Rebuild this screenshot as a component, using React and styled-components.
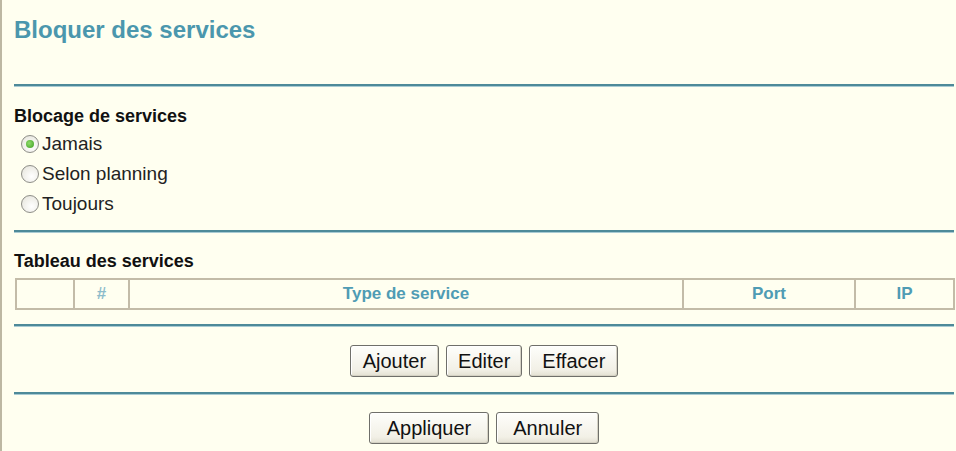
import React from "react";
import styled, { createGlobalStyle } from "styled-components";

const GlobalStyle = createGlobalStyle`
  html, body {
    margin: 0;
    padding: 0;
    background: #fffff0;
  }
  body {
    font-family: "Liberation Sans", Arial, sans-serif;
    color: #111;
  }
`;

const modes = [
  { id: "never", label: "Jamais", checked: true },
  { id: "schedule", label: "Selon planning" },
  { id: "always", label: "Toujours" },
];

const columns = [
  { key: "sel", label: "", width: 58 },
  { key: "num", label: "#", width: 55, light: true },
  { key: "type", label: "Type de service", width: 554 },
  { key: "port", label: "Port", width: 172 },
  { key: "ip", label: "IP", width: 99 },
];

function Radio({ label, checked }) {
  return (
    <RadioRow>
      <RadioDot $checked={checked} />
      <span>{label}</span>
    </RadioRow>
  );
}

export default function App() {
  return (
    <>
      <GlobalStyle />
      <Page>
        <Title>Bloquer des services</Title>
        <Divider $top={40} />

        <SectionLabel $top={19}>Blocage de services</SectionLabel>
        <RadioList>
          {modes.map((m) => (
            <Radio key={m.id} label={m.label} checked={m.checked} />
          ))}
        </RadioList>
        <Divider $top={11} />

        <SectionLabel $top={18}>Tableau des services</SectionLabel>
        <ServiceTable>
          <colgroup>
            {columns.map((c) => (
              <col key={c.key} style={{ width: c.width }} />
            ))}
          </colgroup>
          <thead>
            <tr>
              {columns.map((c) => (
                <HeadCell key={c.key} $light={c.light}>
                  {c.label}
                </HeadCell>
              ))}
            </tr>
          </thead>
        </ServiceTable>
        <Divider $top={14} />

        <ButtonRow $top={18}>
          <Button $pad={12}>Ajouter</Button>
          <Button $pad={11}>Editer</Button>
          <Button $pad={12}>Effacer</Button>
        </ButtonRow>
        <Divider $top={15} />

        <ButtonRow $top={17}>
          <Button $pad={17}>Appliquer</Button>
          <Button $pad={16}>Annuler</Button>
        </ButtonRow>
      </Page>
    </>
  );
}

// ---------- styles ----------

const Page = styled.div`
  box-sizing: border-box;
  min-height: 451px;
  padding: 16px 2px 0 12px;
  border-left: 2px solid #bdb8a3;
  background: #fffff0;
  display: flex;
  flex-direction: column;
`;

const Title = styled.h1`
  margin: 0;
  font-size: 24px;
  line-height: 28px;
  font-weight: bold;
  color: #4b97ad;
`;

const Divider = styled.div`
  margin-top: ${(p) => p.$top}px;
  height: 0;
  border-top: 2px solid #4e8a99;
  border-bottom: 1px solid #a9cbd3;
`;

const SectionLabel = styled.div`
  margin-top: ${(p) => p.$top}px;
  font-size: 18px;
  line-height: 20px;
  font-weight: bold;
  color: #111;
`;

const RadioList = styled.div`
  margin-top: 3px;
  padding-left: 7px;
  display: flex;
  flex-direction: column;
`;

const RadioRow = styled.label`
  height: 30px;
  display: flex;
  align-items: center;
  gap: 3px;
  font-size: 19px;
  color: #222;
`;

const RadioDot = styled.span`
  box-sizing: border-box;
  width: 18px;
  height: 18px;
  border-radius: 50%;
  border: 1.5px solid #8e8e88;
  background: radial-gradient(circle at 60% 65%, #ffffff 0%, #ecebe4 70%, #d8d7ce 100%);
  display: flex;
  align-items: center;
  justify-content: center;

  &::after {
    content: "";
    width: 8px;
    height: 8px;
    border-radius: 50%;
    background: radial-gradient(circle at 40% 40%, #8fdc6a, #3c9d22);
    display: ${(p) => (p.$checked ? "block" : "none")};
  }
`;

const ServiceTable = styled.table`
  margin-top: 7px;
  margin-left: 1px;
  width: 938px;
  table-layout: fixed;
  border-collapse: collapse;
  border: 2px solid #c3bca8;
`;

const HeadCell = styled.th`
  height: 28px;
  padding: 0;
  border: 2px solid #c3bca8;
  font-size: 17px;
  font-weight: bold;
  text-align: center;
  color: ${(p) => (p.$light ? "#8dbccb" : "#4f9cb4")};
`;

const ButtonRow = styled.div`
  margin-top: ${(p) => p.$top}px;
  display: flex;
  justify-content: center;
  gap: 7px;
`;

const Button = styled.button`
  box-sizing: border-box;
  height: 32px;
  padding: 0 ${(p) => p.$pad}px;
  font-family: "Liberation Sans", Arial, sans-serif;
  font-size: 20px;
  color: #111;
  border: 1px solid #6f6f6a;
  border-radius: 3px;
  background: linear-gradient(#fefefb, #f2f0e6 80%, #e3e0d2);
  box-shadow: inset -1px -1px 0 #d5d2c4, inset 1px 1px 0 #ffffff;
  cursor: pointer;
`;
